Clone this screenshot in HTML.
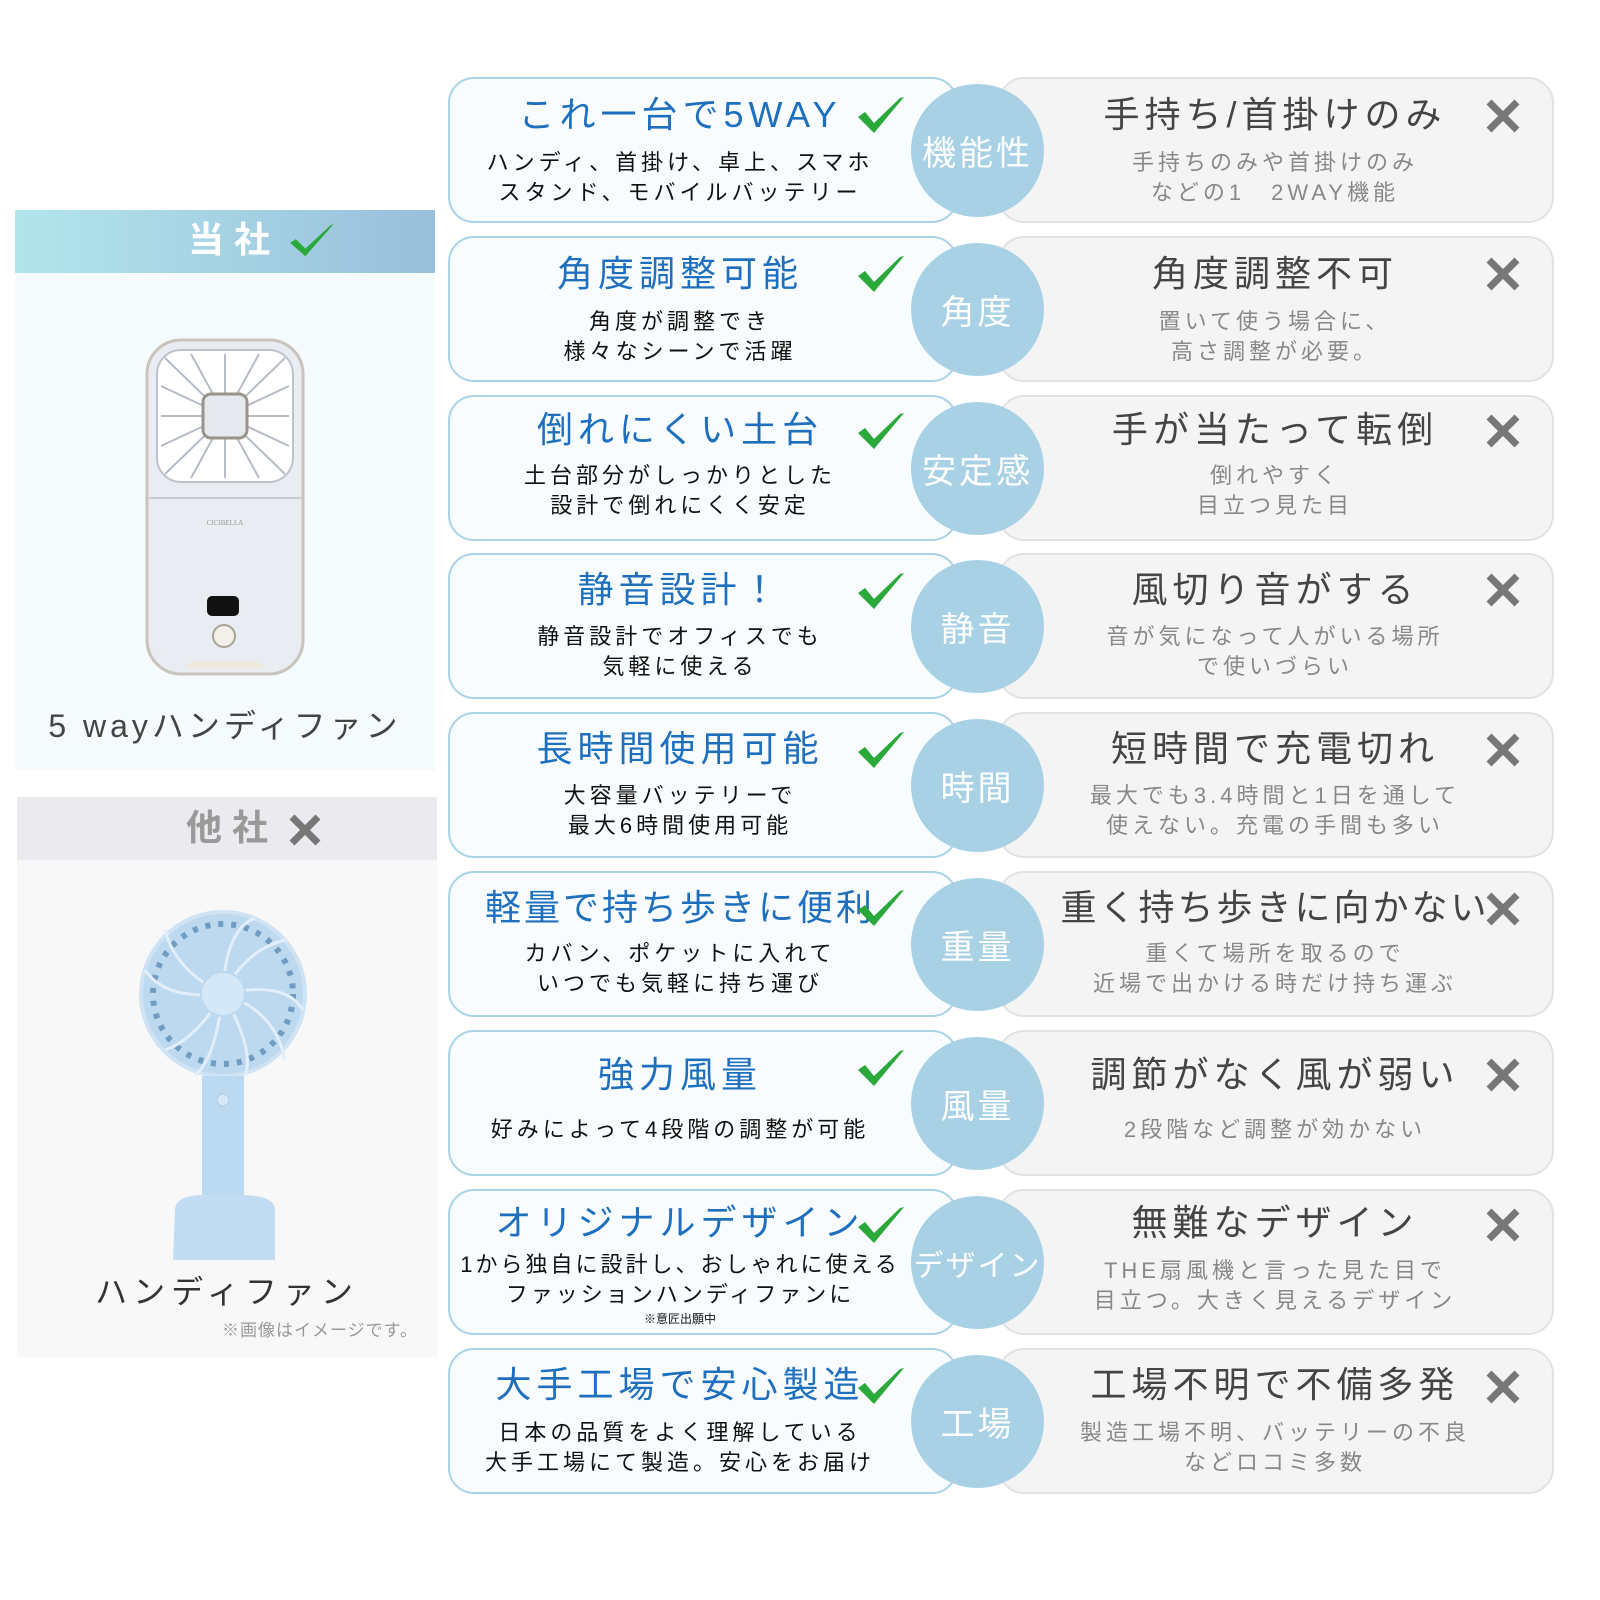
<!DOCTYPE html>
<html><head><meta charset="utf-8"><style>
*{margin:0;padding:0;box-sizing:border-box}
body{width:1600px;height:1600px;background:#fff;position:relative;overflow:hidden;font-family:"Liberation Sans","Noto Sans CJK JP",sans-serif}
.a{position:absolute}
.lc{position:absolute;left:448px;width:510px;height:146px;border:2px solid #a9d3e6;border-radius:26px;background:#f8fcfe}
.rc{position:absolute;left:998px;width:556px;height:146px;border:2px solid #e2e2e2;border-radius:26px;background:#f4f4f4}
.ci{position:absolute;left:911px;width:133px;height:133px;border-radius:50%;background:#a8d1e6;color:#fff;font-size:34px;letter-spacing:3px;display:flex;align-items:center;justify-content:center;font-family:"Noto Sans CJK JP",sans-serif;white-space:nowrap}
.t{position:absolute;text-align:center;white-space:nowrap;line-height:1}
.lt{left:450px;width:460px;color:#1f6fbf;font-size:36px;letter-spacing:5px}
.ls{left:450px;width:460px;color:#111;font-size:22px;letter-spacing:4px;line-height:30px}
.rt{left:1050px;width:450px;color:#444;font-size:36px;letter-spacing:5px}
.rs{left:1050px;width:450px;color:#888;font-size:22px;letter-spacing:4px;line-height:30px}
.ck{position:absolute;left:856px;width:50px;height:40px}
.x{position:absolute;left:1484px;width:38px;height:38px}
</style></head><body>
<!-- left panels -->
<div class="a" style="left:15px;top:210px;width:420px;height:560px;background:#f5fbfc"></div>
<div class="a" style="left:15px;top:210px;width:420px;height:63px;background:linear-gradient(90deg,#b2e5eb,#99bfdc)"></div>
<div class="t" style="left:15px;top:222px;width:360px;color:#fff;font-size:36px;font-weight:bold;letter-spacing:10px;text-align:right;padding-right:95px">当社</div>
<svg class="a" style="left:288px;top:222px" width="48" height="38" viewBox="0 0 50 40"><path d="M2 22 L18 36 L48 2 L44 4 L18 28 L8 18 Z" fill="#2aa83a"/></svg>
<svg class="a" style="left:145px;top:338px" width="160" height="340" viewBox="0 0 160 340">
<rect x="2" y="2" width="156" height="334" rx="34" fill="#e9edf2" stroke="#c8c4bc" stroke-width="3"/>
<rect x="12" y="12" width="136" height="132" rx="24" fill="#fff" stroke="#bcc3cc" stroke-width="2"/>
<g stroke="#b5bcc6" stroke-width="2">
<line x1="80" y1="78" x2="20" y2="20"/><line x1="80" y1="78" x2="140" y2="20"/><line x1="80" y1="78" x2="20" y2="136"/><line x1="80" y1="78" x2="140" y2="136"/><line x1="80" y1="78" x2="80" y2="16"/><line x1="80" y1="78" x2="80" y2="140"/><line x1="80" y1="78" x2="16" y2="78"/><line x1="80" y1="78" x2="144" y2="78"/><line x1="80" y1="78" x2="46" y2="16"/><line x1="80" y1="78" x2="114" y2="16"/><line x1="80" y1="78" x2="46" y2="140"/><line x1="80" y1="78" x2="114" y2="140"/><line x1="80" y1="78" x2="16" y2="48"/><line x1="80" y1="78" x2="144" y2="48"/><line x1="80" y1="78" x2="16" y2="108"/><line x1="80" y1="78" x2="144" y2="108"/></g>
<rect x="58" y="56" width="44" height="44" rx="8" fill="#e6e9ee" stroke="#9a948a" stroke-width="3"/>
<line x1="4" y1="160" x2="156" y2="160" stroke="#c9ccd2" stroke-width="2"/>
<rect x="62" y="258" width="32" height="20" rx="5" fill="#111"/>
<circle cx="79" cy="298" r="11" fill="#f2f0ea" stroke="#a8a294" stroke-width="2"/>
<text x="80" y="187" font-size="7" fill="#999" text-anchor="middle" font-family="Liberation Serif">CICIBELLA</text>
<path d="M40 330 L46 324 L114 324 L120 330 Z" fill="#efe9dc"/>
</svg>
<div class="t" style="left:15px;top:710px;width:420px;color:#444;font-size:32px;letter-spacing:4px">5 wayハンディファン</div>

<div class="a" style="left:17px;top:797px;width:420px;height:560px;background:#f8f8f8"></div>
<div class="a" style="left:17px;top:797px;width:420px;height:63px;background:#ebeaef"></div>
<div class="t" style="left:186px;top:810px;color:#999;font-size:36px;font-weight:bold;letter-spacing:10px">他社</div>
<svg class="a" style="left:288px;top:813px" width="34" height="34" viewBox="0 0 34 34"><path d="M4 4 L30 30 M30 4 L4 30" stroke="#777" stroke-width="7"/></svg>
<svg class="a" style="left:135px;top:910px" width="175" height="350" viewBox="0 0 175 350">
<circle cx="88" cy="84" r="82" fill="#bcd9f0" stroke="#cfe3f4" stroke-width="4"/>
<circle cx="88" cy="84" r="70" fill="none" stroke="#6f9cc0" stroke-width="6" stroke-dasharray="5 8"/>
<g fill="none" stroke="#e2eef9" stroke-width="3">
<path d="M88 84 Q40 60 30 20"/><path d="M88 84 Q110 40 150 30"/><path d="M88 84 Q140 100 150 150"/><path d="M88 84 Q60 130 30 140"/><path d="M88 84 Q30 90 10 60"/><path d="M88 84 Q90 20 120 8"/><path d="M88 84 Q150 70 168 100"/><path d="M88 84 Q80 150 60 165"/><path d="M88 84 Q120 140 110 166"/></g>
<circle cx="88" cy="84" r="22" fill="#d5e8f8" stroke="#bcd9f0" stroke-width="2"/>
<rect x="67" y="166" width="42" height="135" fill="#bcd9f2"/>
<circle cx="88" cy="190" r="6" fill="#d6e8f7" stroke="#a9c9e5"/>
<path d="M40 300 Q40 285 70 285 L105 285 Q140 285 140 300 L140 350 L38 350 Z" fill="#c1dcf3"/>
</svg>
<div class="t" style="left:17px;top:1276px;width:420px;color:#333;font-size:32px;letter-spacing:6px">ハンディファン</div>
<div class="t" style="left:222px;top:1322px;color:#999;font-size:17px;letter-spacing:1px">※画像はイメージです。</div>

<!-- rows -->
<div class="lc" style="top:77px"></div><div class="rc" style="top:77px"></div>
<div class="t lt" style="top:97px">これ一台で5WAY</div>
<div class="t ls" style="top:148px">ハンディ、首掛け、卓上、スマホ<br>スタンド、モバイルバッテリー</div>
<div class="t rt" style="top:97px">手持ち/首掛けのみ</div>
<div class="t rs" style="top:148px">手持ちのみや首掛けのみ<br>などの1　2WAY機能</div>
<div class="ci" style="top:84px">機能性</div>

<div class="lc" style="top:236px"></div><div class="rc" style="top:236px"></div>
<div class="t lt" style="top:256px">角度調整可能</div>
<div class="t ls" style="top:307px">角度が調整でき<br>様々なシーンで活躍</div>
<div class="t rt" style="top:256px">角度調整不可</div>
<div class="t rs" style="top:307px">置いて使う場合に、<br>高さ調整が必要。</div>
<div class="ci" style="top:243px">角度</div>

<div class="lc" style="top:395px"></div><div class="rc" style="top:395px"></div>
<div class="t lt" style="top:412px">倒れにくい土台</div>
<div class="t ls" style="top:461px">土台部分がしっかりとした<br>設計で倒れにくく安定</div>
<div class="t rt" style="top:412px">手が当たって転倒</div>
<div class="t rs" style="top:461px">倒れやすく<br>目立つ見た目</div>
<div class="ci" style="top:402px">安定感</div>

<div class="lc" style="top:553px"></div><div class="rc" style="top:553px"></div>
<div class="t lt" style="top:572px">静音設計！</div>
<div class="t ls" style="top:622px">静音設計でオフィスでも<br>気軽に使える</div>
<div class="t rt" style="top:572px">風切り音がする</div>
<div class="t rs" style="top:622px">音が気になって人がいる場所<br>で使いづらい</div>
<div class="ci" style="top:560px">静音</div>

<div class="lc" style="top:712px"></div><div class="rc" style="top:712px"></div>
<div class="t lt" style="top:731px">長時間使用可能</div>
<div class="t ls" style="top:781px">大容量バッテリーで<br>最大6時間使用可能</div>
<div class="t rt" style="top:731px">短時間で充電切れ</div>
<div class="t rs" style="top:781px">最大でも3.4時間と1日を通して<br>使えない。充電の手間も多い</div>
<div class="ci" style="top:719px">時間</div>

<div class="lc" style="top:871px"></div><div class="rc" style="top:871px"></div>
<div class="t lt" style="top:890px;letter-spacing:3px">軽量で持ち歩きに便利</div>
<div class="t ls" style="top:939px">カバン、ポケットに入れて<br>いつでも気軽に持ち運び</div>
<div class="t rt" style="top:890px;letter-spacing:3px">重く持ち歩きに向かない</div>
<div class="t rs" style="top:939px">重くて場所を取るので<br>近場で出かける時だけ持ち運ぶ</div>
<div class="ci" style="top:878px">重量</div>

<div class="lc" style="top:1030px"></div><div class="rc" style="top:1030px"></div>
<div class="t lt" style="top:1057px">強力風量</div>
<div class="t ls" style="top:1115px">好みによって4段階の調整が可能</div>
<div class="t rt" style="top:1057px">調節がなく風が弱い</div>
<div class="t rs" style="top:1115px">2段階など調整が効かない</div>
<div class="ci" style="top:1037px">風量</div>

<div class="lc" style="top:1189px"></div><div class="rc" style="top:1189px"></div>
<div class="t lt" style="top:1205px">オリジナルデザイン</div>
<div class="t ls" style="top:1250px;letter-spacing:3px">1から独自に設計し、おしゃれに使える<br>ファッションハンディファンに</div>
<div class="t" style="left:450px;width:460px;top:1313px;font-size:12px;color:#111">※意匠出願中</div>
<div class="t rt" style="top:1205px">無難なデザイン</div>
<div class="t rs" style="top:1256px">THE扇風機と言った見た目で<br>目立つ。大きく見えるデザイン</div>
<div class="ci" style="top:1196px;font-size:30px;letter-spacing:2px">デザイン</div>

<div class="lc" style="top:1348px"></div><div class="rc" style="top:1348px"></div>
<div class="t lt" style="top:1367px">大手工場で安心製造</div>
<div class="t ls" style="top:1418px">日本の品質をよく理解している<br>大手工場にて製造。安心をお届け</div>
<div class="t rt" style="top:1367px">工場不明で不備多発</div>
<div class="t rs" style="top:1418px">製造工場不明、バッテリーの不良<br>などロコミ多数</div>
<div class="ci" style="top:1355px">工場</div>

<!-- checks & xs -->
<svg width="0" height="0" style="position:absolute"><defs>
<symbol id="ck" viewBox="0 0 50 40"><path d="M2 22 L18 38 L48 2 L44 3 L18 28 L9 17 Z" fill="#2aa83a"/></symbol>
<symbol id="xx" viewBox="0 0 38 38"><path d="M5 5 L33 33 M33 5 L5 33" stroke="#777" stroke-width="7"/></symbol></defs></svg>
<svg class="ck" style="top:95px"><use href="#ck"/></svg>
<svg class="ck" style="top:254px"><use href="#ck"/></svg>
<svg class="ck" style="top:411px"><use href="#ck"/></svg>
<svg class="ck" style="top:571px"><use href="#ck"/></svg>
<svg class="ck" style="top:730px"><use href="#ck"/></svg>
<svg class="ck" style="top:888px"><use href="#ck"/></svg>
<svg class="ck" style="top:1048px"><use href="#ck"/></svg>
<svg class="ck" style="top:1205px"><use href="#ck"/></svg>
<svg class="ck" style="top:1366px"><use href="#ck"/></svg>
<svg class="x" style="top:97px"><use href="#xx"/></svg>
<svg class="x" style="top:255px"><use href="#xx"/></svg>
<svg class="x" style="top:412px"><use href="#xx"/></svg>
<svg class="x" style="top:571px"><use href="#xx"/></svg>
<svg class="x" style="top:731px"><use href="#xx"/></svg>
<svg class="x" style="top:890px"><use href="#xx"/></svg>
<svg class="x" style="top:1056px"><use href="#xx"/></svg>
<svg class="x" style="top:1206px"><use href="#xx"/></svg>
<svg class="x" style="top:1368px"><use href="#xx"/></svg>
</body></html>
